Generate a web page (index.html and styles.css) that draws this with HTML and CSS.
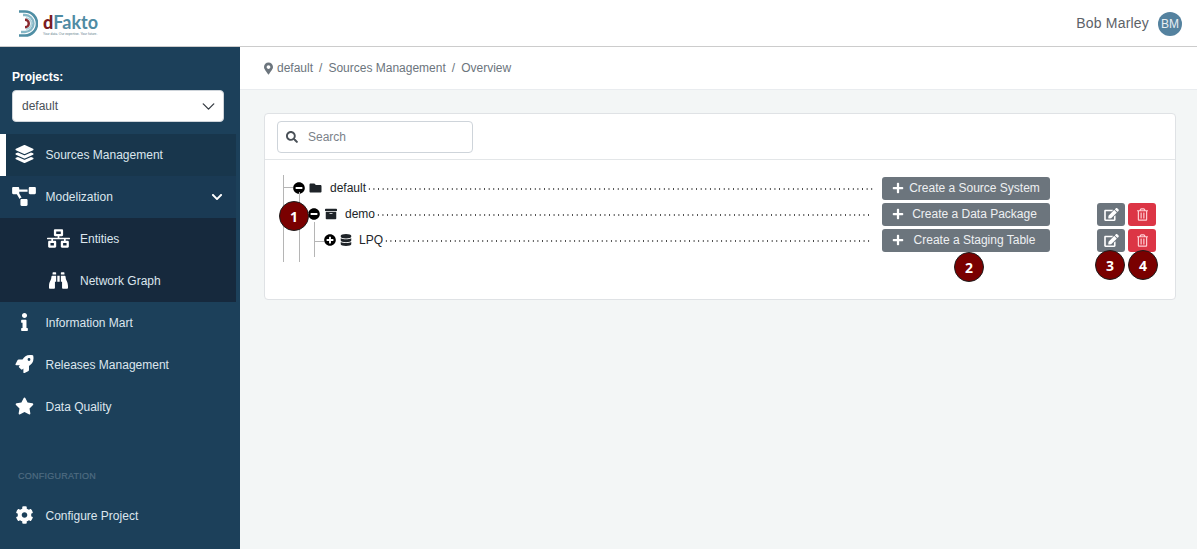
FILE: index.html
```html
<!DOCTYPE html>
<html lang="en">
<head>
<meta charset="utf-8">
<title>dFakto</title>
<link rel="stylesheet" href="styles.css">
</head>
<body>
<svg class="sprite" aria-hidden="true">
  <symbol id="i-layers" viewBox="0 0 512 512"><path d="M12.41 148.02l232.94 105.67c6.8 3.09 14.49 3.09 21.29 0l232.94-105.67c16.55-7.51 16.55-32.52 0-40.03L266.65 2.31a25.607 25.607 0 0 0-21.29 0L12.41 107.98c-16.55 7.51-16.55 32.53 0 40.04zm487.18 88.28l-58.09-26.33-161.64 73.27c-7.56 3.43-15.59 5.17-23.86 5.17s-16.29-1.74-23.86-5.17L70.51 209.97l-58.1 26.33c-16.55 7.5-16.55 32.5 0 40l232.94 105.59c6.8 3.08 14.49 3.08 21.29 0L499.59 276.3c16.55-7.5 16.55-32.5 0-40zm0 127.8l-57.87-26.23-161.86 73.37c-7.56 3.43-15.59 5.17-23.86 5.17s-16.29-1.74-23.86-5.17L70.29 337.87 12.41 364.1c-16.55 7.5-16.55 32.5 0 40l232.94 105.59c6.8 3.08 14.49 3.08 21.29 0L499.59 404.1c16.55-7.5 16.55-32.5 0-40z"/></symbol>
  <symbol id="i-diagram" viewBox="0 0 640 512"><path d="M384 320H256c-17.67 0-32 14.33-32 32v128c0 17.67 14.33 32 32 32h128c17.67 0 32-14.33 32-32V352c0-17.67-14.33-32-32-32zM192 32c0-17.67-14.33-32-32-32H32C14.33 0 0 14.33 0 32v128c0 17.67 14.33 32 32 32h95.72l73.16 128.04C211.98 300.98 232.4 288 256 288h.28L192 175.51V128h224V64H192V32zM608 0H480c-17.67 0-32 14.33-32 32v128c0 17.67 14.33 32 32 32h128c17.67 0 32-14.33 32-32V32c0-17.67-14.33-32-32-32z"/></symbol>
  <symbol id="i-network" viewBox="0 0 640 512"><path d="M640 264v-16c0-8.84-7.16-16-16-16H344v-40h72c17.67 0 32-14.33 32-32V32c0-17.67-14.33-32-32-32H224c-17.67 0-32 14.33-32 32v128c0 17.67 14.33 32 32 32h72v40H16c-8.84 0-16 7.16-16 16v16c0 8.84 7.16 16 16 16h104v40H64c-17.67 0-32 14.33-32 32v128c0 17.67 14.33 32 32 32h160c17.67 0 32-14.33 32-32V352c0-17.67-14.33-32-32-32h-56v-40h304v40h-56c-17.67 0-32 14.33-32 32v128c0 17.67 14.33 32 32 32h160c17.67 0 32-14.33 32-32V352c0-17.67-14.33-32-32-32h-56v-40h104c8.84 0 16-7.16 16-16zM256 128V64h128v64H256zm-64 320H96v-64h96v64zm352 0h-96v-64h96v64z"/></symbol>
  <symbol id="i-binoculars" viewBox="0 0 512 512"><path d="M416 48c0-8.84-7.16-16-16-16h-64c-8.84 0-16 7.16-16 16v48h96V48zM63.91 159.99C61.4 253.84 3.46 274.22 0 404v44c0 17.67 14.33 32 32 32h96c17.67 0 32-14.33 32-32V288h32V128H95.84c-17.63 0-31.45 14.37-31.93 31.99zm384.18 0c-.48-17.62-14.3-31.99-31.93-31.99H320v160h32v160c0 17.67 14.33 32 32 32h96c17.67 0 32-14.33 32-32v-44c-3.46-129.78-61.4-150.16-63.91-244.01zM176 32h-64c-8.84 0-16 7.16-16 16v48h96V48c0-8.84-7.16-16-16-16zm48 256h64V128h-64v160z"/></symbol>
  <symbol id="i-info" viewBox="0 0 192 512"><path d="M20 424.229h20V279.771H20c-11.046 0-20-8.954-20-20V212c0-11.046 8.954-20 20-20h112c11.046 0 20 8.954 20 20v212.229h20c11.046 0 20 8.954 20 20V492c0 11.046-8.954 20-20 20H20c-11.046 0-20-8.954-20-20v-47.771c0-11.046 8.954-20 20-20zM96 0C56.235 0 24 32.235 24 72s32.235 72 72 72 72-32.235 72-72S135.764 0 96 0z"/></symbol>
  <symbol id="i-rocket" viewBox="0 0 512 512"><path d="M505.05 19.1a15.89 15.89 0 0 0-12.2-12.2C460.65 0 435.46 0 410.36 0c-103.2 0-165.1 55.2-211.29 128H94.87A48 48 0 0 0 52 154.49l-49.42 98.8A24 24 0 0 0 24.07 288h103.77l-22.47 22.47a32 32 0 0 0 0 45.25l50.9 50.91a32 32 0 0 0 45.26 0L224 384.16V488a24 24 0 0 0 34.7 21.49l98.7-49.39a47.91 47.91 0 0 0 26.5-42.9V312.79c72.59-46.3 128-108.4 128-211.09.1-25.2.1-50.4-6.85-82.6zM384 168a40 40 0 1 1 40-40 40 40 0 0 1-40 40z"/></symbol>
  <symbol id="i-star" viewBox="0 0 576 512"><path d="M259.3 17.8L194 150.2 47.9 171.5c-26.2 3.8-36.7 36.1-17.7 54.6l105.7 103-25 145.5c-4.5 26.3 23.2 46 46.4 33.7L288 439.6l130.7 68.7c23.2 12.2 50.9-7.4 46.4-33.7l-25-145.5 105.7-103c19-18.5 8.5-50.8-17.7-54.6L382 150.2 316.7 17.8c-11.7-23.6-45.6-23.9-57.4 0z"/></symbol>
  <symbol id="i-cog" viewBox="0 0 512 512"><path d="M487.4 315.7l-42.6-24.6c4.3-23.2 4.3-47 0-70.2l42.6-24.6c4.9-2.8 7.1-8.6 5.5-14-11.1-35.6-30-67.8-54.7-94.6-3.8-4.1-10-5.1-14.8-2.3L380.8 110c-17.9-15.4-38.5-27.3-60.8-35.1V25.8c0-5.6-3.9-10.5-9.4-11.7-36.7-8.2-74.3-7.8-109.2 0-5.5 1.2-9.4 6.1-9.4 11.7V75c-22.2 7.9-42.8 19.8-60.8 35.1L88.7 85.5c-4.9-2.8-11-1.9-14.8 2.3-24.7 26.7-43.6 58.9-54.7 94.6-1.7 5.4.6 11.2 5.5 14L67.3 221c-4.3 23.2-4.3 47 0 70.2l-42.6 24.6c-4.9 2.8-7.1 8.6-5.5 14 11.1 35.6 30 67.8 54.7 94.6 3.8 4.1 10 5.1 14.8 2.3l42.6-24.6c17.9 15.4 38.5 27.3 60.8 35.1v49.2c0 5.6 3.9 10.5 9.4 11.7 36.7 8.2 74.3 7.8 109.2 0 5.5-1.2 9.4-6.1 9.4-11.7v-49.2c22.2-7.9 42.8-19.8 60.8-35.1l42.6 24.6c4.9 2.8 11 1.9 14.8-2.3 24.7-26.7 43.6-58.9 54.7-94.6 1.5-5.5-.7-11.3-5.6-14.1zM256 336c-44.1 0-80-35.9-80-80s35.9-80 80-80 80 35.9 80 80-35.9 80-80 80z"/></symbol>
  <symbol id="i-chevron" viewBox="0 0 448 512"><path d="M207.029 381.476L12.686 187.132c-9.373-9.373-9.373-24.569 0-33.941l22.667-22.667c9.357-9.357 24.522-9.375 33.901-.04L224 284.505l154.745-154.021c9.379-9.335 24.544-9.317 33.901.04l22.667 22.667c9.373 9.373 9.373 24.569 0 33.941L240.971 381.476c-9.373 9.372-24.569 9.372-33.942 0z"/></symbol>
  <symbol id="i-marker" viewBox="0 0 384 512"><path d="M172.268 501.67C26.97 291.031 0 255.455 0 192 0 85.961 85.961 0 192 0s192 85.961 192 192c0 63.455-26.97 99.031-172.268 309.67-9.535 13.774-29.93 13.773-39.464 0zM192 272c44.183 0 80-35.817 80-80s-35.817-80-80-80-80 35.817-80 80 35.817 80 80 80z"/></symbol>
  <symbol id="i-search" viewBox="0 0 512 512"><path d="M505 442.7L405.3 343c-4.5-4.5-10.6-7-17-7H372c27.6-35.3 44-79.7 44-128C416 93.1 322.9 0 208 0S0 93.1 0 208s93.1 208 208 208c48.3 0 92.7-16.4 128-44v16.3c0 6.4 2.5 12.5 7 17l99.7 99.7c9.4 9.4 24.6 9.4 33.9 0l28.3-28.3c9.4-9.4 9.4-24.6.1-34zM208 336c-70.7 0-128-57.2-128-128 0-70.7 57.2-128 128-128 70.7 0 128 57.2 128 128 0 70.7-57.2 128-128 128z"/></symbol>
  <symbol id="i-folder" viewBox="0 0 512 512"><path d="M464 128H272l-64-64H48C21.49 64 0 85.49 0 112v288c0 26.51 21.49 48 48 48h416c26.51 0 48-21.49 48-48V176c0-26.51-21.49-48-48-48z"/></symbol>
  <symbol id="i-archive" viewBox="0 0 512 512"><path d="M32 448c0 17.7 14.3 32 32 32h384c17.7 0 32-14.3 32-32V160H32v288zm160-212c0-6.6 5.4-12 12-12h104c6.6 0 12 5.4 12 12v8c0 6.6-5.4 12-12 12H204c-6.6 0-12-5.4-12-12v-8zM480 32H32C14.3 32 0 46.3 0 64v48c0 8.8 7.2 16 16 16h480c8.8 0 16-7.2 16-16V64c0-17.7-14.3-32-32-32z"/></symbol>
  <symbol id="i-database" viewBox="0 0 448 512"><path d="M448 73.143v45.714C448 159.143 347.667 192 224 192S0 159.143 0 118.857V73.143C0 32.857 100.333 0 224 0s224 32.857 224 73.143zM448 176v102.857C448 319.143 347.667 352 224 352S0 319.143 0 278.857V176c48.125 33.143 136.208 48.572 224 48.572S399.874 209.143 448 176zm0 160v102.857C448 479.143 347.667 512 224 512S0 479.143 0 438.857V336c48.125 33.143 136.208 48.572 224 48.572S399.874 369.143 448 336z"/></symbol>
  <symbol id="i-plus" viewBox="0 0 448 512"><path d="M416 208H272V64c0-17.67-14.33-32-32-32h-32c-17.67 0-32 14.33-32 32v144H32c-17.67 0-32 14.33-32 32v32c0 17.67 14.33 32 32 32h144v144c0 17.67 14.33 32 32 32h32c17.67 0 32-14.33 32-32V304h144c17.67 0 32-14.33 32-32v-32c0-17.67-14.33-32-32-32z"/></symbol>
  <symbol id="i-edit" viewBox="0 0 576 512"><path d="M402.6 83.2l90.2 90.2c3.8 3.8 3.8 10 0 13.8L274.4 405.6l-92.8 10.3c-12.4 1.4-22.9-9.1-21.5-21.5l10.3-92.8L388.8 83.2c3.8-3.8 10-3.8 13.8 0zm162-22.9l-48.8-48.8c-15.2-15.2-39.9-15.2-55.2 0l-35.4 35.4c-3.8 3.8-3.8 10 0 13.8l90.2 90.2c3.8 3.8 10 3.8 13.8 0l35.4-35.4c15.2-15.3 15.2-40 0-55.2zM384 346.2V448H64V128h229.8c3.2 0 6.2-1.3 8.5-3.5l40-40c7.6-7.6 2.2-20.5-8.5-20.5H48C21.5 64 0 85.5 0 112v352c0 26.5 21.5 48 48 48h352c26.5 0 48-21.5 48-48V306.2c0-10.7-12.9-16-20.5-8.5l-40 40c-2.2 2.3-3.5 5.3-3.5 8.5z"/></symbol>
  <symbol id="i-trash" viewBox="0 0 448 512"><path d="M268 416h24a12 12 0 0 0 12-12V188a12 12 0 0 0-12-12h-24a12 12 0 0 0-12 12v216a12 12 0 0 0 12 12zM432 80h-82.41l-34-56.7A48 48 0 0 0 274.41 0H173.59a48 48 0 0 0-41.16 23.3L98.41 80H16A16 16 0 0 0 0 96v16a16 16 0 0 0 16 16h16v336a48 48 0 0 0 48 48h288a48 48 0 0 0 48-48V128h16a16 16 0 0 0 16-16V96a16 16 0 0 0-16-16zM171.84 50.91A6 6 0 0 1 177 48h94a6 6 0 0 1 5.15 2.91L293.61 80H154.39zM368 464H80V128h288zm-212-48h24a12 12 0 0 0 12-12V188a12 12 0 0 0-12-12h-24a12 12 0 0 0-12 12v216a12 12 0 0 0 12 12z"/></symbol>
  <symbol id="i-minus-c" viewBox="0 0 512 512"><path d="M256 8C119 8 8 119 8 256s111 248 248 248 248-111 248-248S393 8 256 8zM124 296c-6.6 0-12-5.4-12-12v-56c0-6.6 5.4-12 12-12h264c6.6 0 12 5.4 12 12v56c0 6.6-5.4 12-12 12H124z"/></symbol>
  <symbol id="i-plus-c" viewBox="0 0 512 512"><path d="M256 8C119 8 8 119 8 256s111 248 248 248 248-111 248-248S393 8 256 8zm144 276c0 6.6-5.4 12-12 12h-92v92c0 6.6-5.4 12-12 12h-56c-6.6 0-12-5.4-12-12v-92h-92c-6.6 0-12-5.4-12-12v-56c0-6.6 5.4-12 12-12h92v-92c0-6.6 5.4-12 12-12h56c6.6 0 12 5.4 12 12v92h92c6.6 0 12 5.4 12 12v56z"/></symbol>
</svg>

<header class="topbar">
  <div class="logo">
    <svg class="logo-mark" viewBox="0 0 20 27" aria-hidden="true">
      <g fill="none">
        <path d="M1 1.5 H7 A12 12 0 0 1 7 25.5 H1" stroke="#4f8ea4" stroke-width="2.6"/>
        <path d="M5 5 H7 A8.5 8.5 0 0 1 7 22 H3" stroke="#86b7c6" stroke-width="2.4"/>
        <path d="M8 8 A5.5 5.5 0 0 1 8 19" stroke="#a9cdd8" stroke-width="1.6"/>
      </g>
      <path d="M7 8.5 A5 5 0 0 1 7 18.5 L7 16 A2.5 2.5 0 0 0 7 11 Z" fill="#8a2a2f"/>
    </svg>
    <div class="logo-text">
      <div class="logo-name"><span class="logo-d">d</span>Fakto</div>
      <div class="logo-tag">Your data. Our expertise. Your future.</div>
    </div>
  </div>
  <div class="user">
    <span class="user-name">Bob Marley</span>
    <span class="avatar">BM</span>
  </div>
</header>

<div class="shell">
  <aside class="sidebar">
    <div class="projects">
      <label class="projects-label">Projects:</label>
      <div class="select">
        <span>default</span>
        <svg class="select-chev" viewBox="0 0 14 8" aria-hidden="true"><path d="M1 1l6 6 6-6" fill="none" stroke="#343a40" stroke-width="1.5" stroke-linecap="round" stroke-linejoin="round"/></svg>
      </div>
    </div>
    <nav class="nav">
      <a class="nav-item active"><svg class="nav-icon"><use href="#i-layers"/></svg><span>Sources Management</span></a>
      <a class="nav-item open"><svg class="nav-icon nav-icon-wide"><use href="#i-diagram"/></svg><span>Modelization</span><svg class="nav-chev"><use href="#i-chevron"/></svg></a>
      <div class="subnav">
        <a class="nav-item sub"><svg class="nav-icon nav-icon-wide"><use href="#i-network"/></svg><span>Entities</span></a>
        <a class="nav-item sub"><svg class="nav-icon"><use href="#i-binoculars"/></svg><span>Network Graph</span></a>
      </div>
      <a class="nav-item"><svg class="nav-icon"><use href="#i-info"/></svg><span>Information Mart</span></a>
      <a class="nav-item"><svg class="nav-icon"><use href="#i-rocket"/></svg><span>Releases Management</span></a>
      <a class="nav-item"><svg class="nav-icon"><use href="#i-star"/></svg><span>Data Quality</span></a>
      <div class="nav-heading">CONFIGURATION</div>
      <a class="nav-item"><svg class="nav-icon"><use href="#i-cog"/></svg><span>Configure Project</span></a>
    </nav>
  </aside>

  <main class="main">
    <div class="crumbs">
      <svg class="crumb-pin"><use href="#i-marker"/></svg>
      <span>default</span><span class="crumb-sep">/</span><span>Sources Management</span><span class="crumb-sep">/</span><span>Overview</span>
    </div>
    <div class="content">
      <section class="card">
        <div class="card-head">
          <div class="search">
            <svg class="search-icon"><use href="#i-search"/></svg>
            <span class="search-ph">Search</span>
          </div>
        </div>
        <div class="card-body">
          <div class="tree">
            <i class="line line-a"></i><i class="line line-b"></i><i class="line line-c"></i>
            <i class="hline hline-a"></i><i class="hline hline-b"></i><i class="hline hline-c"></i>

            <div class="row row-1">
              <div class="node">
                <svg class="toggle"><use href="#i-minus-c"/></svg>
                <svg class="kind"><use href="#i-folder"/></svg>
                <span class="node-name">default</span>
                <span class="dots"></span>
              </div>
              <button class="btn create"><svg class="plus"><use href="#i-plus"/></svg><span class="create-text">Create a Source System</span></button>
              <div class="actions"></div>
            </div>

            <div class="row row-2">
              <div class="node">
                <svg class="toggle"><use href="#i-minus-c"/></svg>
                <svg class="kind"><use href="#i-archive"/></svg>
                <span class="node-name">demo</span>
                <span class="dots"></span>
              </div>
              <button class="btn create"><svg class="plus"><use href="#i-plus"/></svg><span class="create-text">Create a Data Package</span></button>
              <div class="actions">
                <button class="btn square"><svg class="act"><use href="#i-edit"/></svg></button>
                <button class="btn square danger"><svg class="act"><use href="#i-trash"/></svg></button>
              </div>
            </div>

            <div class="row row-3">
              <div class="node">
                <svg class="toggle"><use href="#i-plus-c"/></svg>
                <svg class="kind"><use href="#i-database"/></svg>
                <span class="node-name">LPQ</span>
                <span class="dots"></span>
              </div>
              <button class="btn create"><svg class="plus"><use href="#i-plus"/></svg><span class="create-text">Create a Staging Table</span></button>
              <div class="actions">
                <button class="btn square"><svg class="act"><use href="#i-edit"/></svg></button>
                <button class="btn square danger"><svg class="act"><use href="#i-trash"/></svg></button>
              </div>
            </div>

            <span class="badge badge-1">1</span>
            <span class="badge badge-2">2</span>
            <span class="badge badge-3">3</span>
            <span class="badge badge-4">4</span>
          </div>
        </div>
      </section>
    </div>
  </main>
</div>
</body>
</html>
```
FILE: styles.css
```css
* { box-sizing: border-box; }
html, body { margin: 0; height: 100%; }
body {
  font-family: "Liberation Sans", Arial, sans-serif;
  font-size: 12px;
  color: #212529;
  background: #f3f6f6;
  overflow: hidden;
}
.sprite { display: none; }
svg { fill: currentColor; display: block; }

/* Top bar */
.topbar {
  height: 47px;
  background: #fff;
  border-bottom: 1px solid #ccc;
  display: flex;
  align-items: center;
  justify-content: space-between;
  padding: 2px 15px 0 18px;
}
.logo { display: flex; align-items: center; gap: 5px; }
.logo-mark { width: 20px; height: 27px; margin-bottom: 1px; flex: none; }
.logo-text { display: flex; flex-direction: column; margin-top: 2px; }
.logo-name {
  font-family: Lato, sans-serif;
  font-weight: 700;
  font-size: 18px;
  line-height: 19px;
  color: #4f8ba3;
}
.logo-d { color: #7a1d22; font-weight: 900; }
.logo-tag {
  font-size: 3.3px;
  line-height: 5px;
  color: #5c7a8a;
  white-space: nowrap;
}
.user { display: flex; align-items: center; gap: 9px; }
.user-name { font-size: 14px; color: #5d6268; letter-spacing: .2px; margin-bottom: 2px; }
.avatar {
  width: 24px;
  height: 24px;
  border-radius: 50%;
  background: #54829f;
  color: #e8eef2;
  font-size: 12px;
  display: flex;
  align-items: center;
  justify-content: center;
}

/* Shell */
.shell { display: flex; height: 502px; }

/* Sidebar */
.sidebar {
  width: 240px;
  flex: none;
  background: #1c405a;
  color: #dfe8ef;
}
.projects { padding: 23px 16px 12px 12px; }
.projects-label {
  display: block;
  font-weight: 700;
  color: #fff;
  font-size: 12px;
  line-height: 14px;
  margin-bottom: 6px;
}
.select {
  height: 32px;
  background: #fff;
  border: 1px solid #ced4da;
  border-radius: 4px;
  display: flex;
  align-items: center;
  justify-content: space-between;
  padding: 0 8px 0 9px;
  color: #495057;
  font-size: 12px;
}
.select-chev { width: 13px; height: 7px; }
.nav { width: 236px; }
.nav-item {
  height: 42px;
  display: flex;
  align-items: center;
  padding-left: 45.5px;
  position: relative;
  color: #dce6ee;
  font-size: 12px;
}
.nav-icon {
  position: absolute;
  left: 15px;
  top: 11px;
  width: 19px;
  height: 18px;
  color: #fff;
}
.nav-icon-wide { left: 12px; width: 24px; height: 19px; }
.nav-item.active { background: #18364c; border-left: 6px solid #fff; padding-left: 39.5px; }
.nav-item.active .nav-icon { left: 9px; }
.nav-item.open { background: #1a3a54; }
.nav-chev { position: absolute; right: 13px; top: 15px; width: 12px; height: 12px; color: #fff; }
.subnav { background: #16293d; }
.nav-item.sub { padding-left: 80px; }
.nav-item.sub .nav-icon { left: 47px; width: 23px; height: 19px; }
.nav-heading {
  margin-top: 42px;
  height: 25px;
  padding-left: 18px;
  font-size: 9px;
  line-height: 12px;
  font-weight: 400;
  letter-spacing: .25px;
  color: #4f6c81;
  -webkit-text-stroke: .2px #4f6c81;
}

/* Main */
.main { flex: 1; display: flex; flex-direction: column; min-width: 0; }
.crumbs {
  height: 43px;
  background: #fff;
  border-bottom: 1px solid #e9ecef;
  display: flex;
  align-items: center;
  padding: 0 24px;
  color: #6c757d;
  font-size: 12px;
}
.crumb-pin { width: 9px; height: 13px; margin-right: 4px; color: #6c757d; }
.crumb-sep { margin: 0 6px; }
.content { padding: 23px 21px 0 24px; }
.card {
  background: #fff;
  border: 1px solid #dfe2e5;
  border-radius: 4px;
  height: 187px;
}
.card-head {
  height: 46px;
  border-bottom: 1px solid #e3e6e8;
  padding: 7px 12px;
}
.search {
  width: 196px;
  height: 32px;
  border: 1px solid #ced4da;
  border-radius: 4px;
  display: flex;
  align-items: center;
  padding-left: 8px;
  color: #6c757d;
}
.search-icon { width: 12px; height: 12px; color: #495057; margin-right: 10px; }
.search-ph { font-size: 12px; color: #7b8289; }
.card-body { padding: 17px 19px 0 18px; }

/* Tree */
.tree { position: relative; display: flex; flex-direction: column; gap: 3px; }
.row { display: flex; align-items: center; height: 23px; }
.node { flex: 1; display: flex; align-items: center; min-width: 0; color: #212529; padding-bottom: 2px; }
.row-1 .node { padding-left: 10px; }
.row-2 .node { padding-left: 25px; }
.row-3 .node { padding-left: 41px; }
.toggle { width: 12px; height: 12px; color: #000; flex: none; }
.kind { flex: none; color: #1f2429; height: 12px; width: 13px; margin-left: 5px; }
.row-1 .kind { margin-left: 4px; }
.row-2 .kind { width: 12px; }
.row-3 .kind { width: 12px; margin-left: 4px; }
.node-name { margin-left: 8px; line-height: 14px; }
.row-3 .node-name { margin-left: 7px; }
.dots {
  flex: 1;
  height: 2px;
  margin: 3px 5px 0 1px;
  background-image: radial-gradient(circle, #444 0, #444 .8px, transparent 1px);
  background-size: 4.6px 2px;
  background-repeat: space no-repeat;
}
.row-2 .dots, .row-3 .dots { margin-right: 11px; }
.row-1 .dots { margin-right: 7px; }
.btn {
  border: 0;
  border-radius: 3px;
  background: #6c757d;
  color: #fff;
  font-family: inherit;
  font-size: 12px;
  cursor: pointer;
  padding: 0;
}
.create {
  width: 168px;
  height: 23px;
  flex: none;
  display: flex;
  align-items: center;
  padding: 0 5px 1px 10px;
}
.plus { width: 12px; height: 12px; flex: none; }
.create-text { flex: 1; text-align: center; color: #eef0f2; white-space: nowrap; }
.actions { width: 106px; flex: none; display: flex; gap: 3px; padding-left: 47px; }
.square { width: 28px; height: 23px; display: flex; align-items: center; justify-content: center; }
.danger { background: #dc3545; }
.act { width: 15px; height: 13px; color: #fff; }
.danger .act { width: 11px; height: 13px; color: #ffd0d5; }

/* Connector lines lie behind the tree rows */
.line { position: absolute; width: 1px; background: #b5b5b5; }
.line-a { left: 0; top: -2px; height: 87px; }
.line-b { left: 16px; top: 15px; height: 70px; }
.line-c { left: 31px; top: 45px; height: 35px; }
.hline { position: absolute; height: 1px; background: #b5b5b5; }
.hline-a { left: 0; top: 10px; width: 10px; }
.hline-b { left: 16px; top: 36px; width: 10px; }
.hline-c { left: 31px; top: 64px; width: 10px; }

/* Numbered callouts */
.badge {
  position: absolute;
  width: 30px;
  height: 30px;
  border-radius: 50%;
  background: #7a0000;
  border: 1px solid #1d1d1d;
  color: #fff;
  font-family: "Open Sans", sans-serif;
  font-weight: 700;
  font-size: 14px;
  display: flex;
  align-items: center;
  justify-content: center;
}
.badge-1 { left: -4px; top: 24px; }
.badge-2 { left: 671px; top: 75px; }
.badge-3 { left: 812px; top: 73px; }
.badge-4 { left: 845px; top: 73px; }
```
